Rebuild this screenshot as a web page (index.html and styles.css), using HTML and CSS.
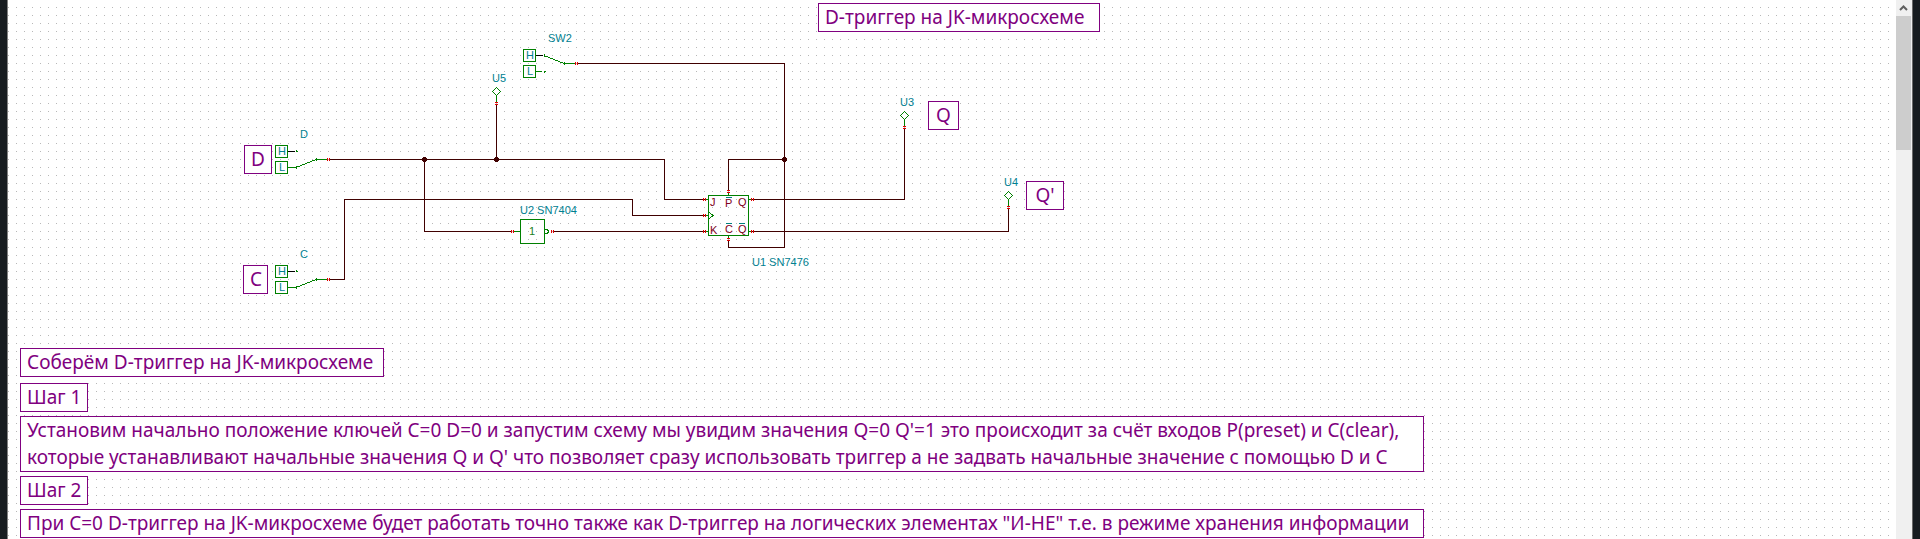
FILE: index.html
```html
<!DOCTYPE html>
<html lang="ru">
<head>
<meta charset="utf-8">
<title>D-триггер на JK-микросхеме</title>
<link rel="stylesheet" href="styles.css">
</head>
<body>
<div class="window">
  <main class="sheet">
    <section class="diagram">
      <svg class="circuit" width="1280" height="348" viewBox="8 0 1280 348" role="img" aria-label="Схема D-триггера">
        <defs>
          <g id="probe" class="part">
            <path d="M.5-3.500l4 4-4 4-4-4z"/>
            <path d="M.5 4.500V12"/>
            <path class="pin" d="M-1 11.500h3M-1 13.500h3"/>
          </g>
          <g id="pins-h"><path class="pin" d="M.5-1v3M2.500-1v3"/></g>
          <g id="pins-v"><path class="pin" d="M-1 .5h3M-1 2.500h3"/></g>
          <g id="keys" class="part">
            <rect x=".5" y=".5" width="12" height="12"/>
            <rect x=".5" y="16.500" width="12" height="12"/>
            <path d="M41.500 13v3M41 14.500h11"/>
          </g>
          <g id="low" class="part">
            <path class="dark" d="M13 6.500h7"/>
            <path d="M21.500 5v2M22 6.500h1M13 22.500h8M21.500 21v3M21 22.500l20-8"/>
          </g>
          <g id="high" class="part">
            <path class="dark" d="M13 6.500h7"/>
            <path d="M21.500 5v3M21 6.500l20 8M13 22.500h6M21.500 22v2M21 22.500h2"/>
          </g>
        </defs>

        <g class="wire">
          <path d="M330 159.500H664.500V199.500H706"/>
          <path d="M330 279.500H344.500V199.500H632.500V215.500H706"/>
          <path d="M424.500 159.500V231.500H512"/>
          <path d="M554 231.500H706"/>
          <path d="M496.500 105V159"/>
          <path d="M578 63.500H784.500V247.500H728.500V240"/>
          <path d="M784 159.500H728.500V191"/>
          <path d="M752 199.500H904.500V129"/>
          <path d="M752 231.500H1008.500V209"/>
        </g>
        <g class="joint">
          <path d="M423 157h3v1h1v3h-1v1h-3v-1h-1v-3h1z"/>
          <path d="M495 157h3v1h1v3h-1v1h-3v-1h-1v-3h1z"/>
          <path d="M783 157h3v1h1v3h-1v1h-3v-1h-1v-3h1z"/>
        </g>

        <use href="#keys" x="275" y="145"/><use href="#low" x="275" y="145"/>
        <use href="#keys" x="275" y="265"/><use href="#low" x="275" y="265"/>
        <use href="#keys" x="523" y="49"/><use href="#high" x="523" y="49"/>
        <use href="#pins-h" x="327" y="159"/>
        <use href="#pins-h" x="327" y="279"/>
        <use href="#pins-h" x="575" y="63"/>

        <use href="#probe" x="496" y="91"/>
        <use href="#probe" x="904" y="115"/>
        <use href="#probe" x="1008" y="195"/>

        <g class="part">
          <rect x="520.500" y="219.500" width="24" height="24"/>
          <path d="M514 231.500h6M545 229.500h2l1 1v2l-1 1h-2"/>
          <rect x="708.500" y="195.500" width="40" height="40"/>
          <path d="M709 212l4 3.500-4 3.500M706 199.500h2M706 215.500h2M706 231.500h2M749 199.500h2M749 231.500h2M728.500 193v2M728.500 236v2"/>
          <path class="bar" d="M726 197.500h6M726 223.500h6M739 223.500h6"/>
        </g>
        <use href="#pins-h" x="511" y="231"/><use href="#pins-h" x="551" y="231"/>
        <use href="#pins-h" x="703" y="199"/><use href="#pins-h" x="703" y="215"/><use href="#pins-h" x="703" y="231"/>
        <use href="#pins-h" x="751" y="199"/><use href="#pins-h" x="751" y="231"/>
        <use href="#pins-v" x="728" y="190"/><use href="#pins-v" x="728" y="238"/>

        <g class="label">
          <text x="548" y="42">SW2</text>
          <text x="492" y="82">U5</text>
          <text x="300" y="138">D</text>
          <text x="300" y="258">C</text>
          <text x="520" y="214">U2 SN7404</text>
          <text x="752" y="266">U1 SN7476</text>
          <text x="900" y="106">U3</text>
          <text x="1004" y="186">U4</text>
          <text x="278" y="155">H</text><text x="279" y="171">L</text>
          <text x="278" y="275">H</text><text x="279" y="291">L</text>
          <text x="526" y="59">H</text><text x="527" y="75">L</text>
        </g>
        <text class="gate" x="529" y="235">1</text>
        <g class="port">
          <text x="710" y="206">J</text>
          <text x="725" y="207">P</text>
          <text x="738" y="206">Q</text>
          <text x="710" y="234">K</text>
          <text x="725" y="233">C</text>
          <text x="738" y="233">Q</text>
        </g>
      </svg>
      <h1 class="note title">D-триггер на JK-микросхеме</h1>
      <span class="note tag tag-d">D</span>
      <span class="note tag tag-c">C</span>
      <span class="note tag tag-q">Q</span>
      <span class="note tag tag-nq">Q'</span>
    </section>
    <section class="steps">
      <p class="note intro">Соберём D-триггер на JK-микросхеме</p>
      <h2 class="note">Шаг 1</h2>
      <p class="note wide">Установим начально положение ключей C=0 D=0 и запустим схему мы увидим значения Q=0 Q'=1 это происходит за счёт входов P(preset) и C(clear),<br>которые устанавливают начальные значения Q и Q' что позволяет сразу использовать триггер а не задвать начальные значение с помощью D и C</p>
      <h2 class="note">Шаг 2</h2>
      <p class="note wide">При C=0 D-триггер на JK-микросхеме будет работать точно также как D-триггер на логических элементах "И-НЕ" т.е. в режиме хранения информации</p>
    </section>
  </main>
  <div class="scrollbar">
    <button class="scroll-up" type="button" aria-label="Вверх">
      <svg width="16" height="16" viewBox="0 0 16 16"><path d="M4 10l3.500-3.500L11 10" /></svg>
    </button>
    <div class="thumb"></div>
  </div>
</div>
</body>
</html>
```
FILE: styles.css
```css
body {
  margin: 0;
  background: #171c20;
}

.window {
  display: flex;
  height: 100vh;
  margin: 0 7px;
  box-sizing: border-box;
  border-left: 1px solid #808080;
  border-right: 1px solid #6a6a6a;
  overflow: hidden;
}

.sheet {
  flex: 1;
  min-width: 0;
  overflow: hidden;
  background-color: #fff;
  background-image: linear-gradient(#fff 7px, transparent 7px), linear-gradient(90deg, #b8b8b8 1px, #fff 1px);
  background-size: 8px 8px;
}

.diagram {
  position: relative;
  height: 348px;
}

.circuit {
  display: block;
  shape-rendering: crispEdges;
  fill: none;
}

.wire { stroke: #400000; }
.joint { fill: #400000; }
.part { stroke: #008000; }
.dark { stroke: #000; }
.pin { stroke: #e00000; }
.bar { stroke: #008080; }

.label, .gate, .port {
  font: 11px "Liberation Sans", Arial, sans-serif;
  fill: #008090;
}
.gate { fill: #208020; }
.port { fill: #800020; }

.note {
  box-sizing: border-box;
  width: fit-content;
  margin: 0;
  padding: 0 6px;
  border: 1px solid #800080;
  background: #fff;
  color: #800080;
  font: 19px/27px "Noto Sans", sans-serif;
  white-space: nowrap;
}

.title, .tag {
  position: absolute;
}
.title { left: 810px; top: 3px; min-width: 282px; }
.tag { text-align: center; }
.tag-d { left: 236px; top: 145px; width: 28px; }
.tag-c { left: 235px; top: 265px; width: 25px; }
.tag-q { left: 920px; top: 101px; width: 31px; }
.tag-nq { left: 1018px; top: 181px; width: 38px; }

.steps {
  display: flex;
  flex-direction: column;
  gap: 4px;
  padding-left: 12px;
}
.intro { margin-bottom: 2px; min-width: 364px; }
.wide { min-width: 1404px; }

.scrollbar {
  flex: none;
  width: 16px;
  background: #f0f0f0;
}
.scroll-up {
  display: block;
  width: 16px;
  height: 16px;
  padding: 0;
  border: 0;
  background: #f0f0f0;
}
.scroll-up svg {
  display: block;
  fill: none;
  stroke: #606060;
  stroke-width: 2;
}
.thumb {
  width: 15px;
  height: 134px;
  background: #cdcdcd;
}
```
